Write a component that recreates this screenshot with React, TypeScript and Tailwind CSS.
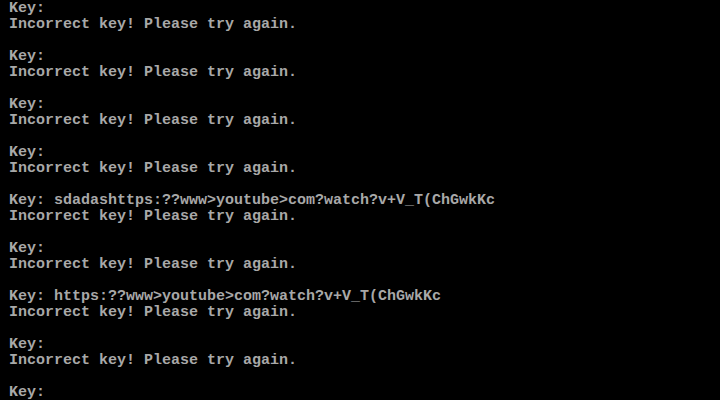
import React from "react";

const lines: string[] = [
  "Key:",
  "Incorrect key! Please try again.",
  "",
  "Key:",
  "Incorrect key! Please try again.",
  "",
  "Key:",
  "Incorrect key! Please try again.",
  "",
  "Key:",
  "Incorrect key! Please try again.",
  "",
  "Key: sdadashttps:??www>youtube>com?watch?v+V_T(ChGwkKc",
  "Incorrect key! Please try again.",
  "",
  "Key:",
  "Incorrect key! Please try again.",
  "",
  "Key: https:??www>youtube>com?watch?v+V_T(ChGwkKc",
  "Incorrect key! Please try again.",
  "",
  "Key:",
  "Incorrect key! Please try again.",
  "",
  "Key:",
];

export default function App() {
  return (
    <div
      className="w-[720px] h-[400px] overflow-hidden bg-black pl-[9px] pt-[1px] text-[#a8a8a8] text-[15px] leading-[16px] font-bold"
      style={{ fontFamily: '"Liberation Mono", "DejaVu Sans Mono", monospace' }}
    >
      {lines.map((l, i) => (
        <div key={i} className="h-[16px] whitespace-pre">
          {l}
        </div>
      ))}
    </div>
  );
}
